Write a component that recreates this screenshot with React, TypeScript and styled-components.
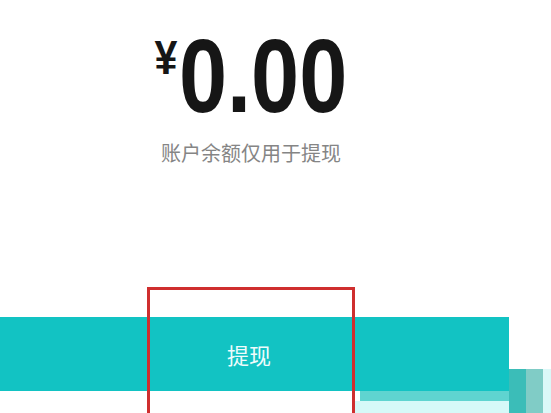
import React from "react";
import styled, { createGlobalStyle } from "styled-components";

const GlobalStyle = createGlobalStyle`
  html, body {
    margin: 0;
    padding: 0;
    background: #ffffff;
  }
  body {
    font-family: "Noto Sans CJK SC", "Noto Sans", sans-serif;
  }
`;

const Page = styled.div`
  position: relative;
  width: 551px;
  height: 413px;
  overflow: hidden;
  background: #ffffff;
`;

const BalanceColumn = styled.div`
  width: 502px;
  padding-top: 25px;
  display: flex;
  flex-direction: column;
  align-items: center;
`;

/* the amount face in the shot is a narrow grotesque; squeeze Liberation Sans to match */
const AmountRow = styled.div`
  display: flex;
  align-items: flex-start;
  color: #161616;
  font-family: "Liberation Sans", Arial, sans-serif;
  font-weight: 700;
  transform: scaleX(0.84);
  transform-origin: center top;
`;

const Currency = styled.span`
  font-size: 49px;
  line-height: 1;
  margin-top: 8px;
  margin-right: 2px;
`;

const Amount = styled.span`
  font-size: 103px;
  line-height: 1;
`;

const Note = styled.div`
  margin-top: 15px;
  font-size: 20px;
  line-height: 20px;
  color: #858585;
`;

const ActionArea = styled.div`
  display: flex;
  align-items: flex-start;
  margin-top: 154px;
`;

const ButtonColumn = styled.div`
  width: 509px;
  display: flex;
  flex-direction: column;
`;

const WithdrawButton = styled.button`
  width: 509px;
  height: 74px;
  border: none;
  margin: 0;
  padding: 0 11px 0 0;
  background: #12c3c3;
  color: #effcfc;
  font-family: "Noto Sans CJK SC", "Noto Sans", sans-serif;
  font-size: 22px;
  display: flex;
  align-items: center;
  justify-content: center;
  cursor: pointer;
`;

const Residue = styled.div<{ $inset: number; $tone: string; $h: number }>`
  margin-left: ${(p) => p.$inset}px;
  height: ${(p) => p.$h}px;
  background: ${(p) => p.$tone};
`;

const SideStrips = styled.div`
  margin-top: 52px;
  display: flex;
  height: 60px;
`;

const Strip = styled.div<{ $tone: string; $w: number }>`
  width: ${(p) => p.$w}px;
  background: ${(p) => p.$tone};
`;

const Highlight = styled.div`
  position: absolute;
  left: 147px;
  top: 287px;
  width: 208px;
  height: 160px;
  box-sizing: border-box;
  border: 3px solid #cf2e2e;
  pointer-events: none;
`;

export default function App() {
  return (
    <Page>
      <GlobalStyle />
      <BalanceColumn>
        <AmountRow>
          <Currency>¥</Currency>
          <Amount>0.00</Amount>
        </AmountRow>
        <Note>账户余额仅用于提现</Note>
      </BalanceColumn>
      <ActionArea>
        <ButtonColumn>
          <WithdrawButton>提现</WithdrawButton>
          <Residue $inset={360} $tone="#5fd4d0" $h={10} />
          <Residue $inset={355} $tone="#d6f9f8" $h={20} />
        </ButtonColumn>
        <SideStrips>
          <Strip $tone="#3bbdb8" $w={17} />
          <Strip $tone="#80ccc6" $w={17} />
          <Strip $tone="#dcf8f8" $w={8} />
        </SideStrips>
      </ActionArea>
      <Highlight />
    </Page>
  );
}
